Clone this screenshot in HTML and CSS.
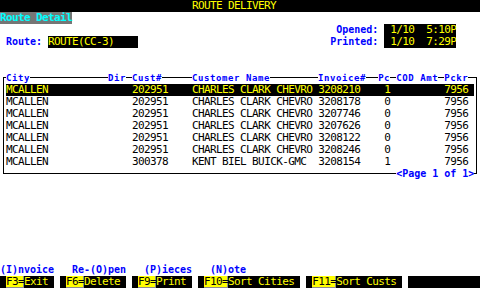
FILE: index.html
```html
<!DOCTYPE html>
<html lang="en">
<head>
  <meta charset="UTF-8">
  <meta name="viewport" content="width=device-width, initial-scale=1.0">
  <link rel="stylesheet" href="styles.css">
  <title>Route Delivery</title>
</head>
<body>

  <div class="screen">
    <div class="row title"><span>                                ROUTE DELIVERY</span></div>
    <div class="row"><span class="tab">Route Detail</span></div>
    <div class="row"><span>                                                        </span><b class="lbl">Opened:</b><span> </span><span class="field"> 1/10  5:10P</span></div>
    <div class="row"><span> </span><b class="lbl">Route:</b><span> </span><span class="field">ROUTE(CC-3)    </span><span>                                </span><b class="lbl">Printed:</b><span> </span><span class="field"> 1/10  7:29P</span></div>

    <div class="gap2"></div>

    <!-- tabla de paradas -->
    <div class="row"><span class="c-tl"> </span><b class="hd">City</b><span class="ln">             </span><b class="hd">Dir</b><span class="ln"> </span><b class="hd">Cust#</b><span class="ln">     </span><b class="hd">Customer Name</b><span class="ln">        </span><b class="hd">Invoice#</b><span class="ln">  </span><b class="hd">Pc</b><span class="ln"> </span><b class="hd">COD Amt</b><span class="ln"> </span><b class="hd">Pckr</b><span class="ln"> </span><span class="c-tr"> </span></div>
    <div class="row"><span class="v-l"> </span><span class="sel">MCALLEN              202951    CHARLES CLARK CHEVRO 3208210    1         7956 </span><span class="v-r"> </span></div>
    <div class="row"><span class="v-l"> </span><span class="cell">MCALLEN              202951    CHARLES CLARK CHEVRO 3208178    0         7956 </span><span class="v-r"> </span></div>
    <div class="row"><span class="v-l"> </span><span class="cell">MCALLEN              202951    CHARLES CLARK CHEVRO 3207746    0         7956 </span><span class="v-r"> </span></div>
    <div class="row"><span class="v-l"> </span><span class="cell">MCALLEN              202951    CHARLES CLARK CHEVRO 3207626    0         7956 </span><span class="v-r"> </span></div>
    <div class="row"><span class="v-l"> </span><span class="cell">MCALLEN              202951    CHARLES CLARK CHEVRO 3208122    0         7956 </span><span class="v-r"> </span></div>
    <div class="row"><span class="v-l"> </span><span class="cell">MCALLEN              202951    CHARLES CLARK CHEVRO 3208246    0         7956 </span><span class="v-r"> </span></div>
    <div class="row"><span class="v-l"> </span><span class="cell">MCALLEN              300378    KENT BIEL BUICK-GMC  3208154    1         7956 </span><span class="v-r"> </span></div>
    <div class="row"><span class="c-bl"> </span><span class="ln">                                                                 </span><b class="lbl">&lt;Page 1 of 1&gt;</b><span class="c-br"> </span></div>

    <div class="gap7"></div>

    <div class="row"><b class="lbl">(I)nvoice</b><span>   </span><b class="lbl">Re-(O)pen</b><span>   </span><b class="lbl">(P)ieces</b><span>   </span><b class="lbl">(N)ote</b></div>
    <div class="row keys">
      <span class="key"><span class="fk">F3=</span>Exit</span>
      <span class="key"><span class="fk">F6=</span>Delete</span>
      <span class="key"><span class="fk">F9=</span>Print</span>
      <span class="key"><span class="fk">F10=</span>Sort Cities</span>
      <span class="key"><span class="fk">F11=</span>Sort Custs</span>
      <span class="key blank"></span>
    </div>
  </div>

</body>
</html>
```

FILE: styles.css
```css
body {
  margin: 0;
  background-color: #fff;
}

.screen {
  width: 480px;
  height: 288px;
  overflow: hidden;
  font-family: "DejaVu Sans Mono", monospace;
  font-size: 11px;
  letter-spacing: -0.62px; /* 6px por celda */
  color: #000;
}

.row {
  display: flex;
  height: 12px;
  line-height: 12px;
  white-space: pre;
}

.title {
  background-color: #000;
  color: #ff0;
}

.tab {
  background-color: #767676;
  color: #0ff;
  font-weight: bold;
}

.lbl {
  color: #00f;
  font-size: 10px;
  letter-spacing: -0.02px;
}

.hd {
  color: #00f;
  font-size: 9px;
  letter-spacing: 0.58px;
}

.field,
.sel {
  background-color: #000;
  color: #ff0;
}

.gap2 {
  height: 24px;
}

.gap7 {
  height: 84px;
}

/* lineas del marco */
.ln {
  background: linear-gradient(#000, #000) 0 5px / 100% 1px no-repeat;
}

.c-tl {
  background:
    linear-gradient(#000, #000) 3px 5px / 3px 1px no-repeat,
    linear-gradient(#000, #000) 3px 5px / 1px 7px no-repeat;
}

.c-tr {
  background:
    linear-gradient(#000, #000) 0 5px / 3px 1px no-repeat,
    linear-gradient(#000, #000) 2px 5px / 1px 7px no-repeat;
}

.v-l {
  background: linear-gradient(#000, #000) 3px 0 / 1px 12px no-repeat;
}

.v-r {
  background: linear-gradient(#000, #000) 2px 0 / 1px 12px no-repeat;
}

.c-bl {
  background:
    linear-gradient(#000, #000) 3px 0 / 1px 6px no-repeat,
    linear-gradient(#000, #000) 3px 5px / 3px 1px no-repeat;
}

.c-br {
  background:
    linear-gradient(#000, #000) 2px 0 / 1px 6px no-repeat,
    linear-gradient(#000, #000) 0 5px / 3px 1px no-repeat;
}

/* teclas de funcion */
.keys {
  column-gap: 6px;
}

.key {
  display: flex;
  padding: 0 6px;
  background-color: #000;
  color: #ff0;
}

.key.blank {
  flex: 1;
}

.fk {
  background-color: #ff0;
  color: #000;
  box-shadow: inset -1px -1px 0 #8c8c8c;
}
```
